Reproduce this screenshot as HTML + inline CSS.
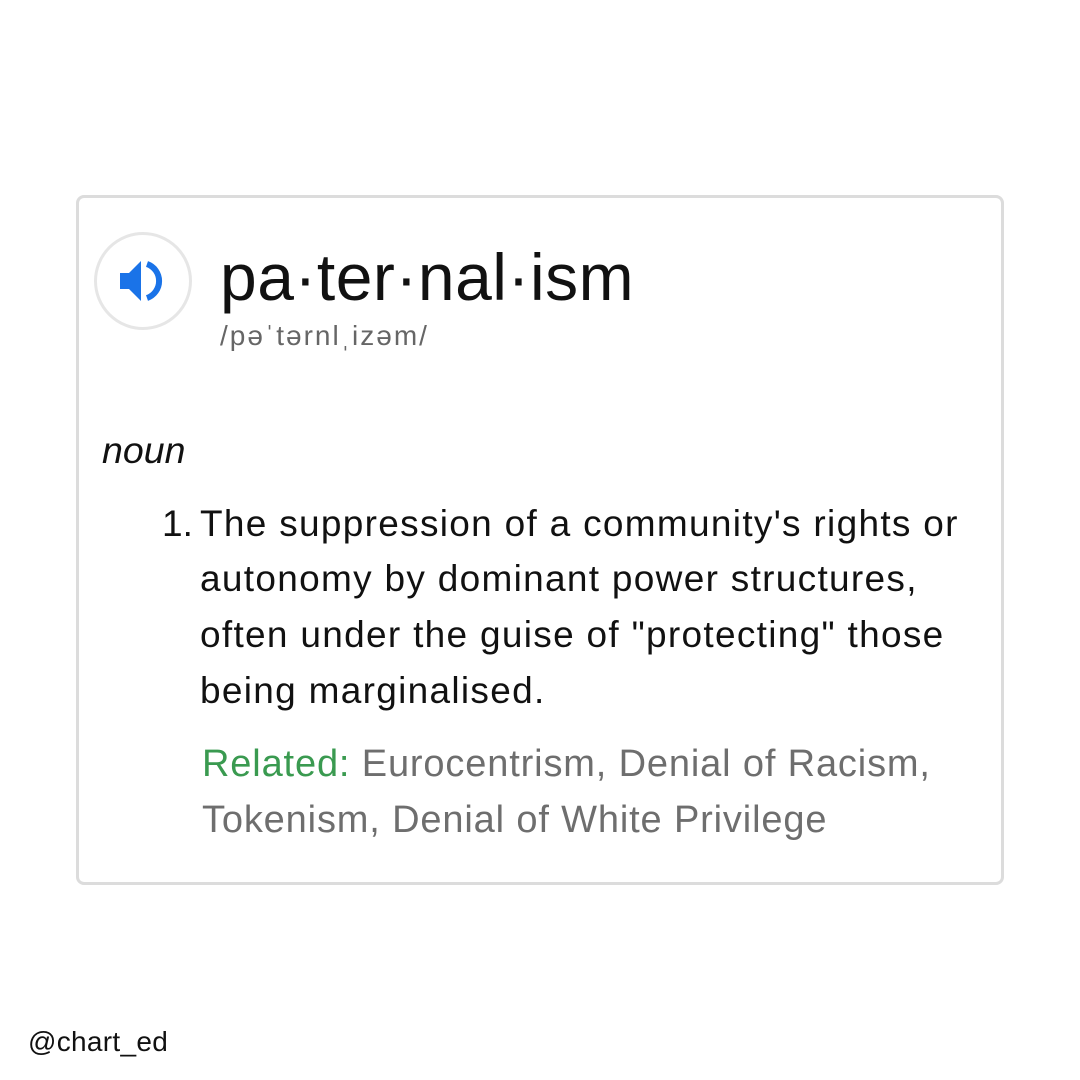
<!DOCTYPE html>
<html><head><meta charset="utf-8"><style>
body{margin:0;width:1080px;height:1080px;background:#fff;font-family:"Liberation Sans",sans-serif;position:relative;overflow:hidden}
.card{position:absolute;left:76px;top:195px;width:922px;height:684px;border:3px solid #dcdcdc;border-radius:8px}
.t{position:absolute;white-space:nowrap;line-height:1}
.circ{position:absolute;left:94px;top:232px;width:92px;height:92px;border:3px solid #e6e6e6;border-radius:50%}
.d{font-size:37px;letter-spacing:1.3px;color:#111}
.r{font-size:38px;letter-spacing:0.85px;color:#6e6e6e}
</style></head><body>
<div class="card"></div>
<div class="circ"></div>
<svg style="position:absolute;left:116px;top:255px" width="54" height="52" viewBox="0 0 54 52">
<path d="M4 18 H13 L25 6 V46 L13 34 H4 Z" fill="#1a73e8"/>
<path d="M31 9 A18 18 0 0 1 31 43" stroke="#1a73e8" stroke-width="6" fill="none"/>
</svg>
<div class="t" style="left:220px;top:244px;font-size:66px;letter-spacing:0.5px;color:#111">pa·ter·nal·ism</div>
<div class="t" style="left:220px;top:322px;font-size:28px;letter-spacing:2px;color:#666">/pəˈtərnlˌizəm/</div>
<div class="t" style="left:102px;top:432px;font-size:37.5px;font-style:italic;color:#111">noun</div>
<div class="t d" style="left:162px;top:505px;letter-spacing:0">1.</div>
<div class="t d" style="left:200px;top:505px">The suppression of a community's rights or</div>
<div class="t d" style="left:200px;top:560px">autonomy by dominant power structures,</div>
<div class="t d" style="left:200px;top:616px">often under the guise of "protecting" those</div>
<div class="t d" style="left:200px;top:672px">being marginalised.</div>
<div class="t r" style="left:202px;top:745px"><span style="color:#3a9a50">Related:</span> Eurocentrism, Denial of Racism,</div>
<div class="t r" style="left:202px;top:801px">Tokenism, Denial of White Privilege</div>
<div class="t" style="left:28px;top:1028px;font-size:28px;letter-spacing:0.3px;color:#111">@chart_ed</div>
</body></html>
